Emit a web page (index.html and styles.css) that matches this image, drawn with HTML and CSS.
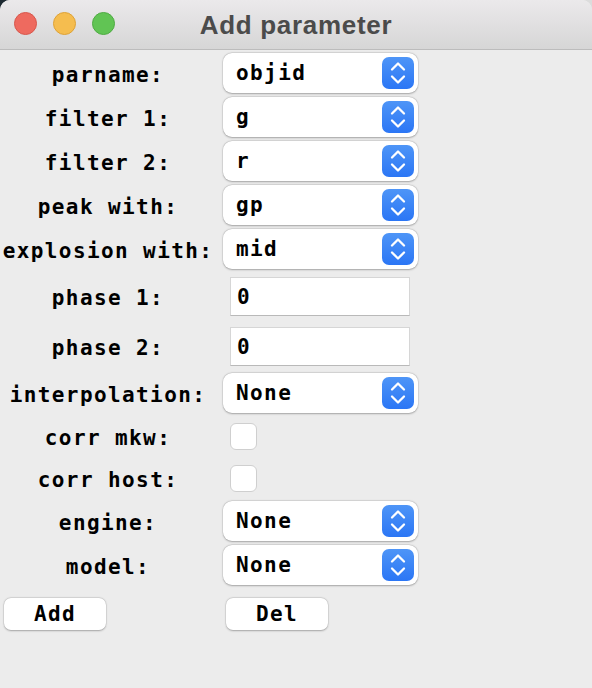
FILE: index.html
```html
<!DOCTYPE html>
<html>
<head>
<meta charset="utf-8">
<link rel="stylesheet" href="styles.css">
</head>
<body>
<div class="window">
  <div class="titlebar">
    <div class="lights">
      <span class="light red"></span>
      <span class="light yellow"></span>
      <span class="light green"></span>
    </div>
    <div class="title">Add parameter</div>
  </div>
  <div class="form">
    <div class="label">parname:</div>
    <div class="select"><span>objid</span><span class="stepper"><svg width="32" height="32" viewBox="0 0 32 32"><path d="M10 12.5 L16 6.5 L22 12.5 M10 19.5 L16 25.5 L22 19.5" fill="none" stroke="#fff" stroke-width="2.3" stroke-linecap="round" stroke-linejoin="round"/></svg></span></div>

    <div class="label">filter 1:</div>
    <div class="select"><span>g</span><span class="stepper"><svg width="32" height="32" viewBox="0 0 32 32"><path d="M10 12.5 L16 6.5 L22 12.5 M10 19.5 L16 25.5 L22 19.5" fill="none" stroke="#fff" stroke-width="2.3" stroke-linecap="round" stroke-linejoin="round"/></svg></span></div>

    <div class="label">filter 2:</div>
    <div class="select"><span>r</span><span class="stepper"><svg width="32" height="32" viewBox="0 0 32 32"><path d="M10 12.5 L16 6.5 L22 12.5 M10 19.5 L16 25.5 L22 19.5" fill="none" stroke="#fff" stroke-width="2.3" stroke-linecap="round" stroke-linejoin="round"/></svg></span></div>

    <div class="label">peak with:</div>
    <div class="select"><span>gp</span><span class="stepper"><svg width="32" height="32" viewBox="0 0 32 32"><path d="M10 12.5 L16 6.5 L22 12.5 M10 19.5 L16 25.5 L22 19.5" fill="none" stroke="#fff" stroke-width="2.3" stroke-linecap="round" stroke-linejoin="round"/></svg></span></div>

    <div class="label">explosion with:</div>
    <div class="select"><span>mid</span><span class="stepper"><svg width="32" height="32" viewBox="0 0 32 32"><path d="M10 12.5 L16 6.5 L22 12.5 M10 19.5 L16 25.5 L22 19.5" fill="none" stroke="#fff" stroke-width="2.3" stroke-linecap="round" stroke-linejoin="round"/></svg></span></div>

    <div class="label">phase 1:</div>
    <div class="entry">0</div>

    <div class="label">phase 2:</div>
    <div class="entry">0</div>

    <div class="label">interpolation:</div>
    <div class="select sel-after"><span>None</span><span class="stepper"><svg width="32" height="32" viewBox="0 0 32 32"><path d="M10 12.5 L16 6.5 L22 12.5 M10 19.5 L16 25.5 L22 19.5" fill="none" stroke="#fff" stroke-width="2.3" stroke-linecap="round" stroke-linejoin="round"/></svg></span></div>

    <div class="label">corr mkw:</div>
    <div class="checkcell"><span class="checkbox"></span></div>

    <div class="label">corr host:</div>
    <div class="checkcell"><span class="checkbox"></span></div>

    <div class="label">engine:</div>
    <div class="select"><span>None</span><span class="stepper"><svg width="32" height="32" viewBox="0 0 32 32"><path d="M10 12.5 L16 6.5 L22 12.5 M10 19.5 L16 25.5 L22 19.5" fill="none" stroke="#fff" stroke-width="2.3" stroke-linecap="round" stroke-linejoin="round"/></svg></span></div>

    <div class="label">model:</div>
    <div class="select"><span>None</span><span class="stepper"><svg width="32" height="32" viewBox="0 0 32 32"><path d="M10 12.5 L16 6.5 L22 12.5 M10 19.5 L16 25.5 L22 19.5" fill="none" stroke="#fff" stroke-width="2.3" stroke-linecap="round" stroke-linejoin="round"/></svg></span></div>

    <div class="btncell"><button class="btn btn-add">Add</button></div>
    <div class="btncell"><button class="btn btn-del">Del</button></div>
  </div>
</div>
</body>
</html>
```

FILE: styles.css
```css
html {
  margin: 0;
  padding: 0;
  height: 100%;
  background: linear-gradient(to right, #1e2a32 50%, #dcdcdc 50%);
}
body {
  margin: 0;
  padding: 0;
  height: 100%;
}
.window {
  height: 100%;
  background: #ececec;
  border-radius: 10px 10px 0 0;
  overflow: hidden;
}
.titlebar {
  position: relative;
  height: 49px;
  background: linear-gradient(to bottom, #ebe9eb, #d6d6d6);
  border-bottom: 1px solid #bcbcbc;
  display: flex;
  align-items: center;
  justify-content: center;
}
.lights {
  position: absolute;
  left: 14px;
  top: 12px;
  display: flex;
  gap: 16px;
}
.light {
  width: 23px;
  height: 23px;
  border-radius: 50%;
  box-sizing: border-box;
}
.red { background: #ee6a5f; border: 1px solid #d8574c; }
.yellow { background: #f5bd4f; border: 1px solid #dea236; }
.green { background: #61c454; border: 1px solid #4fab43; }
.title {
  font-family: "Liberation Sans", Arial, sans-serif;
  font-weight: bold;
  font-size: 26px;
  letter-spacing: 0.7px;
  color: #4b4b4b;
  margin-top: 1px;
}
.form {
  display: grid;
  grid-template-columns: 218px 200px;
  padding-top: 1px;
  font-family: "DejaVu Sans Mono", Menlo, monospace;
  font-weight: bold;
  font-size: 21px;
  letter-spacing: 1.4px;
  color: #000;
}
.label {
  display: flex;
  align-items: center;
  justify-content: center;
  white-space: nowrap;
  padding-right: 2px;
  padding-top: 3px;
}
.select {
  margin: 2px 0 2px 5px;
  height: 40px;
  width: 195px;
  box-sizing: border-box;
  background: #fff;
  border-radius: 9px;
  box-shadow: 0 0.5px 2px rgba(0,0,0,0.28), 0 0 0 0.5px rgba(0,0,0,0.08);
  display: flex;
  align-items: center;
  justify-content: space-between;
  padding: 0 4px 0 13px;
}
.stepper {
  width: 32px;
  height: 32px;
  border-radius: 7px;
  background: linear-gradient(to bottom, #4e95f7, #2b76f5);
  display: flex;
}
.entry {
  margin: 6px 0 5px 12px;
  height: 39px;
  width: 180px;
  box-sizing: border-box;
  background: #fff;
  border: 1px solid #d6d6d6;
  border-bottom-color: #b9b9b9;
  display: flex;
  align-items: center;
  padding-left: 6px;
}
.checkcell {
  padding: 8px 0 7px 12px;
}
.checkbox {
  display: block;
  width: 27px;
  height: 27px;
  box-sizing: border-box;
  background: #fff;
  border: 1px solid #cfcfcf;
  border-radius: 6px;
}
.btncell {
  padding-top: 11px;
}
.btn {
  font: inherit;
  letter-spacing: inherit;
  color: #000;
  width: 102px;
  height: 32px;
  border: none;
  border-radius: 7px;
  background: #fff;
  box-shadow: 0 0.5px 2px rgba(0,0,0,0.28), 0 0 0 0.5px rgba(0,0,0,0.08);
  padding: 0;
  display: flex;
  align-items: center;
  justify-content: center;
}
.btn-add { margin-left: 4px; }
.btn-del { margin-left: 8px; }
```
